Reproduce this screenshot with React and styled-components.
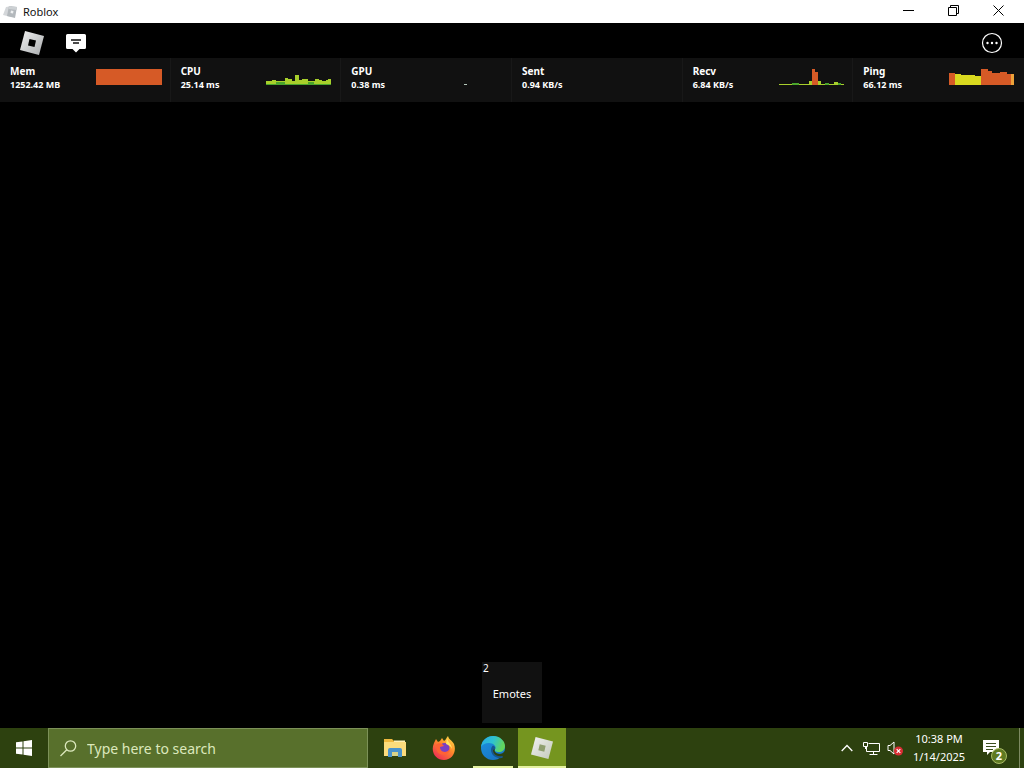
import React from "react";
import styled, { createGlobalStyle, css } from "styled-components";

const GlobalStyle = createGlobalStyle`
  * { box-sizing: border-box; }
  body {
    margin: 0;
    background: #000;
    font-family: "Noto Sans", "Open Sans", sans-serif;
  }
  button { font: inherit; color: inherit; }
`;

const Desktop = styled.div`
  display: flex;
  flex-direction: column;
  min-height: 100vh;
  background: #000;
  color: #fff;
`;

const iconButton = css`
  display: flex;
  align-items: center;
  justify-content: center;
  padding: 0;
  border: 0;
  background: transparent;
`;

const TitleBar = styled.header`
  display: flex;
  align-items: center;
  height: 23px;
  padding-left: 3px;
  background: #fff;
  color: #111;
`;

const WindowTitle = styled.h1`
  flex: 1;
  margin: 0 0 0 5px;
  font-size: 11px;
  font-weight: 400;
  line-height: 16px;
`;

const WindowButton = styled.button`
  ${iconButton}
  width: 45px;
  height: 20px;
  color: #000;
`;

const WindowControls = styled.div`
  display: flex;
  align-self: flex-start;
  padding-right: 3px;
`;

const TopBar = styled.nav`
  display: flex;
  align-items: center;
  gap: 20px;
  height: 35px;
  padding: 4px 20px 0;
`;

const TopButton = styled.button`
  ${iconButton}
  width: 24px;
  height: 24px;
  margin-left: ${(p) => (p.$end ? "auto" : "0")};
`;

const StatsBar = styled.section`
  display: grid;
  grid-template-columns: repeat(6, 1fr);
  height: 44px;
  background: #111;
`;

const Stat = styled.div`
  display: flex;
  justify-content: space-between;
  align-items: flex-start;
  padding: 7px 9px 0 10px;
  box-shadow: inset -1px 0 #181818;

  &:last-child { box-shadow: none; }
`;

const StatText = styled.dl`
  margin: 0;
  font-weight: 700;
`;

const StatName = styled.dt`
  font-size: 10px;
  line-height: 13px;
`;

const StatValue = styled.dd`
  margin: 0;
  font-size: 9px;
  line-height: 13px;
`;

const Graph = styled.svg`
  display: block;
  width: 66px;
  height: 20px;
`;

const Game = styled.main`
  display: flex;
  flex: 1;
  align-items: flex-end;
  justify-content: center;
  padding-bottom: 5px;
`;

const HotbarSlot = styled.button`
  position: relative;
  width: 60px;
  height: 61px;
  padding: 3px 0 0;
  border: 0;
  background: #111;
  font-size: 11px;
  line-height: 16px;
`;

const SlotKey = styled.span`
  position: absolute;
  top: 0;
  left: 1px;
  font-size: 10px;
  line-height: 13px;
`;

const Taskbar = styled.footer`
  display: flex;
  height: 40px;
  background: #2d410f;
`;

const StartButton = styled.button`
  ${iconButton}
  width: 48px;
`;

const Search = styled.label`
  display: flex;
  align-items: center;
  gap: 10px;
  width: 320px;
  padding: 1px 0 0 11px;
  border: 1px solid #7c9158;
  background: #58702c;
  color: #dce8bd;
`;

const SearchInput = styled.input`
  flex: 1;
  min-width: 0;
  padding: 0;
  border: 0;
  outline: 0;
  background: transparent;
  color: #dce8bd;
  font-family: inherit;
  font-size: 14px;
  line-height: 20px;

  &::placeholder { color: #dce8bd; opacity: 1; }
`;

const Apps = styled.div`
  display: flex;
  gap: 1px;
  padding-left: 3px;
`;

const AppButton = styled.button`
  ${iconButton}
  width: 48px;
  background: ${(p) => (p.$active ? "#75951f" : "transparent")};
`;

const AppFace = styled.span`
  display: flex;
  align-items: center;
  justify-content: center;
  width: ${(p) => (p.$wide ? "48px" : "40px")};
  height: 40px;
  box-shadow: ${(p) => (p.$running ? "inset 0 -2px #e4f1a0" : "none")};
`;

const Tray = styled.div`
  display: flex;
  align-items: center;
  margin-left: auto;
`;

const TrayButton = styled.button`
  ${iconButton}
  width: 24px;
  height: 40px;
`;

const Clock = styled.button`
  width: 64px;
  height: 40px;
  padding: 0;
  border: 0;
  background: transparent;
  font-size: 11px;
  line-height: 18px;
  text-align: center;
`;

const ClockLine = styled.time`
  display: block;
`;

const Notifications = styled.button`
  ${iconButton}
  position: relative;
  width: 48px;
  height: 40px;
  padding-right: 8px;
`;

const Badge = styled.span`
  position: absolute;
  right: 12px;
  bottom: 4px;
  width: 16px;
  height: 16px;
  border: 1px solid #a9bb67;
  border-radius: 50%;
  background: #5f7a22;
  font-size: 11px;
  font-weight: 700;
  line-height: 14px;
  text-align: center;
`;

const ShowDesktop = styled.button`
  width: 5px;
  height: 40px;
  padding: 0;
  border: 0;
  border-left: 1px solid #7d8a62;
  background: transparent;
`;

const GREEN = "#4aa52c";
const LIME = "#a8cf2b";
const YELLOW = "#d9d91f";
const ORANGE = "#d65a26";
const AMBER = "#eda23a";

// Each bar is [x, width, height, colour], measured up from the graph's base line.
const STATS = [
  { name: "Mem", value: "1252.42 MB", bars: [[0, 66, 16, ORANGE]] },
  {
    name: "CPU",
    value: "25.14 ms",
    bars: [
      [0, 6, 4, LIME], [6, 4, 5, LIME], [10, 9, 4, LIME], [19, 3, 7, LIME],
      [22, 4, 6, LIME], [26, 3, 4, LIME], [29, 4, 10, LIME], [33, 3, 5, LIME],
      [36, 6, 6, LIME], [42, 7, 4, LIME], [49, 4, 6, LIME], [53, 3, 5, LIME],
      [56, 4, 4, LIME], [60, 2, 5, LIME], [62, 3, 6, LIME], [0, 65, 1, GREEN],
      [10, 9, 3, GREEN], [42, 6, 3, GREEN],
    ],
  },
  { name: "GPU", value: "0.38 ms", bars: [[27, 3, 1, "#b5c8bb"]] },
  { name: "Sent", value: "0.94 KB/s", bars: [] },
  {
    name: "Recv",
    value: "6.84 KB/s",
    bars: [
      [1, 65, 1, LIME], [14, 7, 2, GREEN], [31, 4, 4, LIME], [34, 3, 16, ORANGE],
      [37, 3, 13, ORANGE], [40, 3, 4, LIME], [47, 4, 2, GREEN], [56, 4, 3, LIME],
      [60, 3, 2, GREEN],
    ],
  },
  {
    name: "Ping",
    value: "66.12 ms",
    bars: [
      [0, 6, 12, ORANGE], [6, 6, 11, YELLOW], [12, 14, 10, YELLOW], [26, 6, 9, YELLOW],
      [32, 3, 16, ORANGE], [35, 4, 16, ORANGE], [39, 4, 14, ORANGE], [43, 8, 12, ORANGE],
      [51, 7, 13, ORANGE], [58, 4, 11, ORANGE], [62, 3, 11, AMBER],
    ],
  },
];

function StatCell({ name, value, bars }) {
  return (
    <Stat>
      <StatText>
        <StatName>{name}</StatName>
        <StatValue>{value}</StatValue>
      </StatText>
      <Graph viewBox="0 0 66 20" shapeRendering="crispEdges" aria-hidden="true">
        {bars.map(([x, w, h, fill], i) => (
          <rect key={i} x={x} y={20 - h} width={w} height={h} fill={fill} />
        ))}
      </Graph>
    </Stat>
  );
}

function RobloxMark({ size, id, hole, from = "#f1f1f1", to = "#a8abad" }) {
  return (
    <svg width={size} height={size} viewBox="0 0 24 24" aria-hidden="true">
      <defs>
        <linearGradient id={id} x1="0" y1="0" x2="1" y2="1">
          <stop offset="0" stopColor={from} />
          <stop offset="1" stopColor={to} />
        </linearGradient>
      </defs>
      <path d="M5 0 24 5 19 24 0 19Z" fill={`url(#${id})`} />
      <path d="M9.500 8 16 9.500 14.500 16 8 14.500Z" fill={hole} />
    </svg>
  );
}

function WindowIcon() {
  return (
    <svg width="15" height="14" viewBox="0 0 15 14" aria-hidden="true">
      <path d="M3 2 9 1 8 12 0 10Z" fill="#d4d7da" />
      <path d="M6 1 14 2 12 13 4 11Z" fill="#b3b8bc" />
      <path d="M6 1 14 2 13.500 5 5.500 4Z" fill="#cdd1d4" />
      <path d="M8 5.500 10.500 6 10 8.500 7.500 8Z" fill="#eef0f1" />
    </svg>
  );
}

function ExplorerIcon() {
  return (
    <svg width="22" height="20" viewBox="0 0 22 20" aria-hidden="true">
      <path d="M0 1H8L10 3H21V18H0Z" fill="#efb93f" />
      <path d="M0 4H22V18H0Z" fill="#fbdc7c" />
      <path d="M10 2.500H21V4H10Z" fill="#fff0b5" />
      <path d="M4 19V12Q4 10 6 10H16Q18 10 18 12V19H14V14H8V19Z" fill="#4a93cc" />
      <path d="M8 14H14V18H8Z" fill="#d9d488" />
    </svg>
  );
}

function FirefoxIcon() {
  return (
    <svg width="24" height="24" viewBox="0 0 24 24" aria-hidden="true">
      <defs>
        <linearGradient id="ff-body" x1="0.9" y1="0" x2="0.2" y2="1">
          <stop offset="0" stopColor="#ffe34a" />
          <stop offset="0.45" stopColor="#ff8a2a" />
          <stop offset="1" stopColor="#ee2757" />
        </linearGradient>
      </defs>
      <path d="M2 7 4 3 6 6 8 5 10 2 12 5C14 4 14 2 16 0 17 4 20 4 22 8 25 16 20 24 12 24 4 24-2 16 2 7Z" fill="url(#ff-body)" />
      <circle cx="12.500" cy="12" r="5" fill="#7a3fc4" />
      <path d="M4 9C7 6 10 7 12 10L8 11C8 16 14 18 18 13 18 19 8 21 5 15Z" fill="#ff6234" />
      <path d="M15 2C16 7 20 8 20 13 19 10 16 9 14 8Z" fill="#ffe565" />
    </svg>
  );
}

function EdgeIcon() {
  return (
    <svg width="24" height="24" viewBox="0 0 24 24" aria-hidden="true">
      <defs>
        <linearGradient id="edge-wave" x1="0" y1="0" x2="1" y2="0.3">
          <stop offset="0" stopColor="#25a9e8" />
          <stop offset="0.55" stopColor="#2fc3cf" />
          <stop offset="1" stopColor="#62d65c" />
        </linearGradient>
        <linearGradient id="edge-base" x1="0" y1="0" x2="0.6" y2="1">
          <stop offset="0" stopColor="#1b93df" />
          <stop offset="1" stopColor="#1976c6" />
        </linearGradient>
      </defs>
      <circle cx="12" cy="12" r="12" fill="url(#edge-base)" />
      <path d="M0 11C1 4 6 0 12 0 19 0 24 5 24 10 24 14 21 16 18 16 15 16 13 15 14 13 16 10 12 7 8 7 4 7 1 9 0 11Z" fill="url(#edge-wave)" />
      <path d="M14 13C12 15 14 18 18 18 20 18 22 17 23 16L24 19 21 22C14 23 10 18 10 14 10 12 11 10 12 9.500 14 10.500 15 12 14 13Z" fill="#17568f" />
      <path d="M14 13C12.500 15 15 18 19 18 21 18 22.500 17 24 15V22L21 20C16 21 12 18 12 14Z" fill="#2d410f" />
    </svg>
  );
}

export default function App() {
  return (
    <>
      <GlobalStyle />
      <Desktop>
        <TitleBar>
          <WindowIcon />
          <WindowTitle>Roblox</WindowTitle>
          <WindowControls>
            <WindowButton aria-label="Minimize">
              <svg width="11" height="11" viewBox="0 0 11 11"><path d="M0 5.500H11" stroke="currentColor" /></svg>
            </WindowButton>
            <WindowButton aria-label="Restore">
              <svg width="11" height="11" viewBox="0 0 11 11" fill="none" stroke="currentColor">
                <path d="M.5 2.500H8.500V10.500H.5ZM2.500 2.500V.5H10.500V8.500H8.500" />
              </svg>
            </WindowButton>
            <WindowButton aria-label="Close">
              <svg width="11" height="11" viewBox="0 0 11 11"><path d="M.5.5 10.500 10.500M10.500.5.5 10.500" stroke="currentColor" /></svg>
            </WindowButton>
          </WindowControls>
        </TitleBar>

        <TopBar>
          <TopButton aria-label="Roblox menu">
            <RobloxMark size={24} id="mark-top" hole="#000" />
          </TopButton>
          <TopButton aria-label="Chat">
            <svg width="20" height="20" viewBox="0 0 20 20">
              <path d="M1.500 1H18.500Q20 1 20 2.500V14.500Q20 16 18.500 16H13.500L10 19.500 6.500 16H1.500Q0 16 0 14.500V2.500Q0 1 1.500 1Z" fill="#fff" />
              <path d="M5 7H15M7 10H13" stroke="#111" strokeWidth="1.500" />
            </svg>
          </TopButton>
          <TopButton $end aria-label="More">
            <svg width="22" height="22" viewBox="0 0 22 22">
              <circle cx="11" cy="11" r="9.500" fill="none" stroke="#fff" strokeWidth="1.200" />
              <circle cx="6.500" cy="11" r="1.200" fill="#fff" />
              <circle cx="11" cy="11" r="1.200" fill="#fff" />
              <circle cx="15.500" cy="11" r="1.200" fill="#fff" />
            </svg>
          </TopButton>
        </TopBar>

        <StatsBar aria-label="Performance stats">
          {STATS.map((s) => <StatCell key={s.name} {...s} />)}
        </StatsBar>

        <Game>
          <HotbarSlot>
            <SlotKey>2</SlotKey>
            Emotes
          </HotbarSlot>
        </Game>

        <Taskbar>
          <StartButton aria-label="Start">
            <svg width="16" height="16" viewBox="0 0 16 16" fill="#fff">
              <path d="M0 2.300 6.500 1.400V7.500H0ZM7.500 1.200 16 0V7.500H7.500ZM0 8.500H6.500V14.600L0 13.700ZM7.500 8.500H16V16L7.500 14.800Z" />
            </svg>
          </StartButton>
          <Search>
            <svg width="17" height="17" viewBox="0 0 17 17" fill="none" stroke="currentColor" strokeWidth="1.300" aria-hidden="true">
              <circle cx="10.500" cy="6" r="5.200" />
              <path d="M6.800 9.700.5 16" />
            </svg>
            <SearchInput type="text" placeholder="Type here to search" aria-label="Type here to search" />
          </Search>
          <Apps>
            <AppButton aria-label="File Explorer"><AppFace><ExplorerIcon /></AppFace></AppButton>
            <AppButton aria-label="Firefox"><AppFace><FirefoxIcon /></AppFace></AppButton>
            <AppButton aria-label="Microsoft Edge"><AppFace $running><EdgeIcon /></AppFace></AppButton>
            <AppButton $active aria-label="Roblox">
              <AppFace $wide $running>
                <RobloxMark size={22} id="mark-task" hole="#8f9f6f" to="#c3cabb" />
              </AppFace>
            </AppButton>
          </Apps>
          <Tray>
            <TrayButton aria-label="Show hidden icons">
              <svg width="12" height="8" viewBox="0 0 12 8"><path d="M.7 7 6 1.500 11.300 7" fill="none" stroke="#fff" strokeWidth="1.300" /></svg>
            </TrayButton>
            <TrayButton aria-label="Network">
              <svg width="17" height="15" viewBox="0 0 17 15" fill="none" stroke="#fff">
                <path d="M5.500 2.500H16.500V10.500H3.500V6M10.500 10.500V13.500M6.500 13.500H14.500" />
                <path d="M.5 1.500H4.500V5.500H.5ZM2.500 5.500V8" />
              </svg>
            </TrayButton>
            <TrayButton aria-label="Volume muted">
              <svg width="17" height="15" viewBox="0 0 17 15">
                <path d="M1 4.500H3L7 1V13L3 9.500H1Z" fill="none" stroke="#fff" />
                <circle cx="11.500" cy="10" r="4.500" fill="#d92e34" />
                <path d="M9.700 8.200 13.300 11.800M13.300 8.200 9.700 11.800" stroke="#fff" strokeWidth="1.200" />
              </svg>
            </TrayButton>
            <Clock>
              <ClockLine>10:38 PM</ClockLine>
              <ClockLine>1/14/2025</ClockLine>
            </Clock>
            <Notifications aria-label="Notifications">
              <svg width="16" height="16" viewBox="0 0 16 16">
                <path d="M0 0H16V12H7L4 15V12H0Z" fill="#fff" />
                <path d="M3 3.500H13M3 6.500H13M3 9.500H10" stroke="#3c4f20" />
              </svg>
              <Badge>2</Badge>
            </Notifications>
            <ShowDesktop aria-label="Show desktop" />
          </Tray>
        </Taskbar>
      </Desktop>
    </>
  );
}
